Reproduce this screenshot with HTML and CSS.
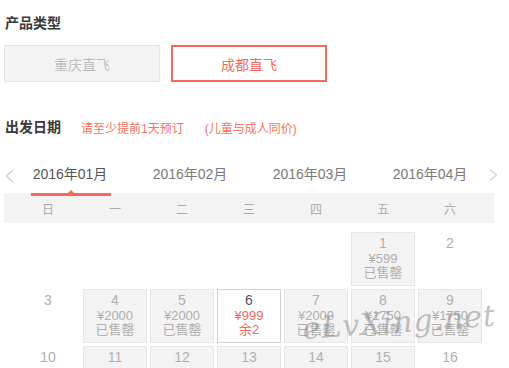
FILE: index.html
```html
<!DOCTYPE html>
<html lang="zh-CN">
<head>
<meta charset="utf-8">
<title>产品类型</title>
<link rel="stylesheet" href="styles.css">
</head>
<body>
<div class="page">
  <div class="title">产品类型</div>
  <div class="types">
    <div class="type-btn disabled">重庆直飞</div>
    <div class="type-btn active">成都直飞</div>
  </div>

  <div class="date-row">
    <span class="title">出发日期</span>
    <span class="tip">请至少提前1天预订</span>
    <span class="tip tip2">(儿童与成人同价)</span>
  </div>

  <div class="tabs">
    <span class="arrow left"><svg width="9" height="14" viewBox="0 0 9 14"><polyline points="8,1 1.5,7 8,13" fill="none" stroke="#d0d0d0" stroke-width="1.3"/></svg></span>
    <span class="tab current">2016年01月</span>
    <span class="tab">2016年02月</span>
    <span class="tab">2016年03月</span>
    <span class="tab">2016年04月</span>
    <span class="arrow right"><svg width="9" height="12" viewBox="0 0 9 12"><polyline points="1,0.5 7.5,6 1,11.5" fill="none" stroke="#d0d0d0" stroke-width="1.3"/></svg></span>
  </div>

  <div class="week">
    <span>日</span><span>一</span><span>二</span><span>三</span><span>四</span><span>五</span><span>六</span>
  </div>

  <div class="days">
    <div class="day blank"></div>
    <div class="day blank"></div>
    <div class="day blank"></div>
    <div class="day blank"></div>
    <div class="day blank"></div>
    <div class="day box"><div class="num">1</div><div class="line">¥599</div><div class="line">已售罄</div></div>
    <div class="day"><div class="num">2</div></div>

    <div class="day"><div class="num">3</div></div>
    <div class="day box"><div class="num">4</div><div class="line">¥2000</div><div class="line">已售罄</div></div>
    <div class="day box"><div class="num">5</div><div class="line">¥2000</div><div class="line">已售罄</div></div>
    <div class="day sel"><div class="num">6</div><div class="line">¥999</div><div class="line">余2</div></div>
    <div class="day box"><div class="num">7</div><div class="line">¥2000</div><div class="line">已售罄</div></div>
    <div class="day box"><div class="num">8</div><div class="line">¥1750</div><div class="line">已售罄</div></div>
    <div class="day box"><div class="num">9</div><div class="line">¥1750</div><div class="line">已售罄</div></div>

    <div class="day"><div class="num">10</div></div>
    <div class="day box"><div class="num">11</div></div>
    <div class="day box"><div class="num">12</div></div>
    <div class="day box"><div class="num">13</div></div>
    <div class="day box"><div class="num">14</div></div>
    <div class="day box"><div class="num">15</div></div>
    <div class="day"><div class="num">16</div></div>
  </div>

  <div class="watermark">eLvXing.net</div>
</div>
</body>
</html>
```

FILE: styles.css
```css
html, body {
  margin: 0;
  padding: 0;
  background: #fff;
  overflow: hidden;
}
body {
  font-family: "Liberation Sans", "Noto Sans CJK SC", sans-serif;
  color: #333;
}
.page {
  position: relative;
  width: 509px;
  height: 368px;
  overflow: hidden;
}
.title {
  font-size: 14px;
  line-height: 20px;
  font-weight: bold;
  color: #3a3a3a;
  padding-left: 5px;
}
.page > .title {
  margin-top: 13px;
}
.types {
  display: flex;
  margin-top: 12px;
  padding-left: 4px;
  gap: 11px;
}
.type-btn {
  box-sizing: border-box;
  width: 156px;
  height: 37px;
  display: flex;
  align-items: center;
  justify-content: center;
  font-size: 14px;
}
.type-btn.disabled {
  background: #f3f3f3;
  border: 1px solid #e6e6e6;
  color: #bdbdbd;
}
.type-btn.active {
  background: #fff;
  border: 2px solid #f7695b;
  color: #f7695b;
}
.date-row {
  margin-top: 35px;
  display: flex;
  align-items: center;
  height: 20px;
}
.date-row .title {
  padding-left: 5px;
}
.tip {
  font-size: 12px;
  color: #f9715f;
  margin-left: 20px;
}
.tip2 {
  margin-left: 21px;
}
.tabs {
  margin-top: 27px;
  display: flex;
  height: 29px;
  position: relative;
}
.arrow {
  display: flex;
  align-items: flex-start;
  padding-top: 5px;
}
.arrow.left {
  width: 14px;
  margin-right: -4px;
  justify-content: flex-end;
}
.arrow.right {
  margin-left: -1px;
}
.tab {
  width: 120px;
  text-align: center;
  font-size: 14px;
  line-height: 20px;
  color: #7a7a7a;
  position: relative;
}
.tab.current {
  color: #555;
}
.tab.current::after {
  content: "";
  position: absolute;
  left: 21px;
  right: 19px;
  bottom: -3px;
  height: 3px;
  background: #f7695b;
}
.tab.current::before {
  content: "";
  position: absolute;
  left: 58px;
  bottom: 0;
  border-left: 3px solid transparent;
  border-right: 3px solid transparent;
  border-bottom: 3px solid #f7695b;
}
.week {
  margin-left: 4px;
  width: 490px;
  box-sizing: border-box;
  padding: 0 12px;
  height: 30px;
  background: #f3f3f3;
  display: grid;
  grid-template-columns: repeat(7, 64px);
  column-gap: 3px;
  align-items: center;
}
.week span {
  text-align: center;
  font-size: 12px;
  color: #ababab;
}
.days {
  margin: 9px 0 0 16px;
  display: grid;
  grid-template-columns: repeat(7, 64px);
  grid-auto-rows: 54px;
  gap: 3px;
}
.day {
  box-sizing: border-box;
  border: 1px solid transparent;
  padding-top: 2px;
  text-align: center;
  color: #b0b0b0;
}
.day.box {
  background: #f3f3f3;
  border-color: #e6e6e6;
}
.day.sel {
  background: #fff;
  border-color: #d2d2d2;
}
.num {
  font-size: 14px;
  line-height: 17px;
}
.line {
  font-size: 13px;
  line-height: 14px;
}
.day.sel .num {
  color: #555;
}
.day.sel .line {
  color: #f7695b;
}
.watermark {
  position: absolute;
  left: 304px;
  top: 309px;
  font-family: "DejaVu Serif", serif;
  font-style: italic;
  font-size: 30px;
  line-height: 40px;
  letter-spacing: 1px;
  color: rgba(140, 140, 140, 0.55);
  transform: rotate(-4deg);
  transform-origin: left bottom;
  white-space: nowrap;
}
```
